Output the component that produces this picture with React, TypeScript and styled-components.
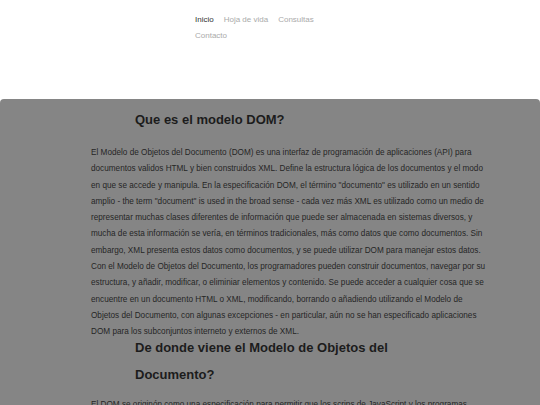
import React from "react";
import styled, { createGlobalStyle } from "styled-components";

const Global = createGlobalStyle`
  html, body { margin: 0; padding: 0; background: #ffffff; overflow: hidden; }
  body { font-family: "Liberation Sans", Arial, sans-serif; }
`;

const Page = styled.div`
  display: flex;
  flex-direction: column;
  width: 540px;
  min-height: 405px;
`;

const Header = styled.header`
  height: 99px;
  padding: 12px 0 0 195px;
  box-sizing: border-box;
`;

const Nav = styled.nav`
  display: flex;
  flex-wrap: wrap;
  column-gap: 10px;
  width: 150px;
`;

const NavLink = styled.a<{ $active?: boolean }>`
  font-size: 8px;
  line-height: 16px;
  color: ${(p) => (p.$active ? "#333333" : "#aaaaaa")};
  text-decoration: none;
`;

const Content = styled.main`
  flex: 1;
  background: #858585;
  border-radius: 4px 4px 0 0;
  padding: 7px 0 0 91px;
`;

const Article = styled.div`
  width: 400px;
`;

const Heading = styled.h2<{ $follows?: boolean }>`
  margin: ${(p) => (p.$follows ? "-7px 0 9px" : "0 0 12px")};
  padding: 0 56px 0 44px;
  font-size: 13px;
  line-height: 27px;
  font-weight: bold;
  color: #1c1c1c;
`;

const Para = styled.p`
  margin: 0;
  font-size: 8.2px;
  line-height: 16.3px;
  color: #262626;
`;

export default function App() {
  return (
    <Page>
      <Global />
      <Header>
        <Nav>
          <NavLink $active>Inicio</NavLink>
          <NavLink>Hoja de vida</NavLink>
          <NavLink>Consultas</NavLink>
          <NavLink>Contacto</NavLink>
        </Nav>
      </Header>
      <Content>
        <Article>
          <Heading>Que es el modelo DOM?</Heading>
          <Para>
            El Modelo de Objetos del Documento (DOM) es una interfaz de programación de aplicaciones (API) para
            documentos validos HTML y bien construidos XML. Define la estructura lógica de los documentos y el modo
            en que se accede y manipula. En la especificación DOM, el término "documento" es utilizado en un sentido
            amplio - the term "document" is used in the broad sense - cada vez más XML es utilizado como un medio de
            representar muchas clases diferentes de información que puede ser almacenada en sistemas diversos, y
            mucha de esta información se vería, en términos tradicionales, más como datos que como documentos. Sin
            embargo, XML presenta estos datos como documentos, y se puede utilizar DOM para manejar estos datos.
            Con el Modelo de Objetos del Documento, los programadores pueden construir documentos, navegar por su
            estructura, y añadir, modificar, o eliminiar elementos y contenido. Se puede acceder a cualquier cosa que se
            encuentre en un documento HTML o XML, modificando, borrando o añadiendo utilizando el Modelo de
            Objetos del Documento, con algunas excepciones - en particular, aún no se han especificado aplicaciones
            DOM para los subconjuntos interneto y externos de XML.
          </Para>
          <Heading $follows>De donde viene el Modelo de Objetos del Documento?</Heading>
          <Para>
            El DOM se originón como una especificación para permitir que los scrips de JavaScript y los programas
            informáticos fueran portables entre los navegadores web.
          </Para>
        </Article>
      </Content>
    </Page>
  );
}
